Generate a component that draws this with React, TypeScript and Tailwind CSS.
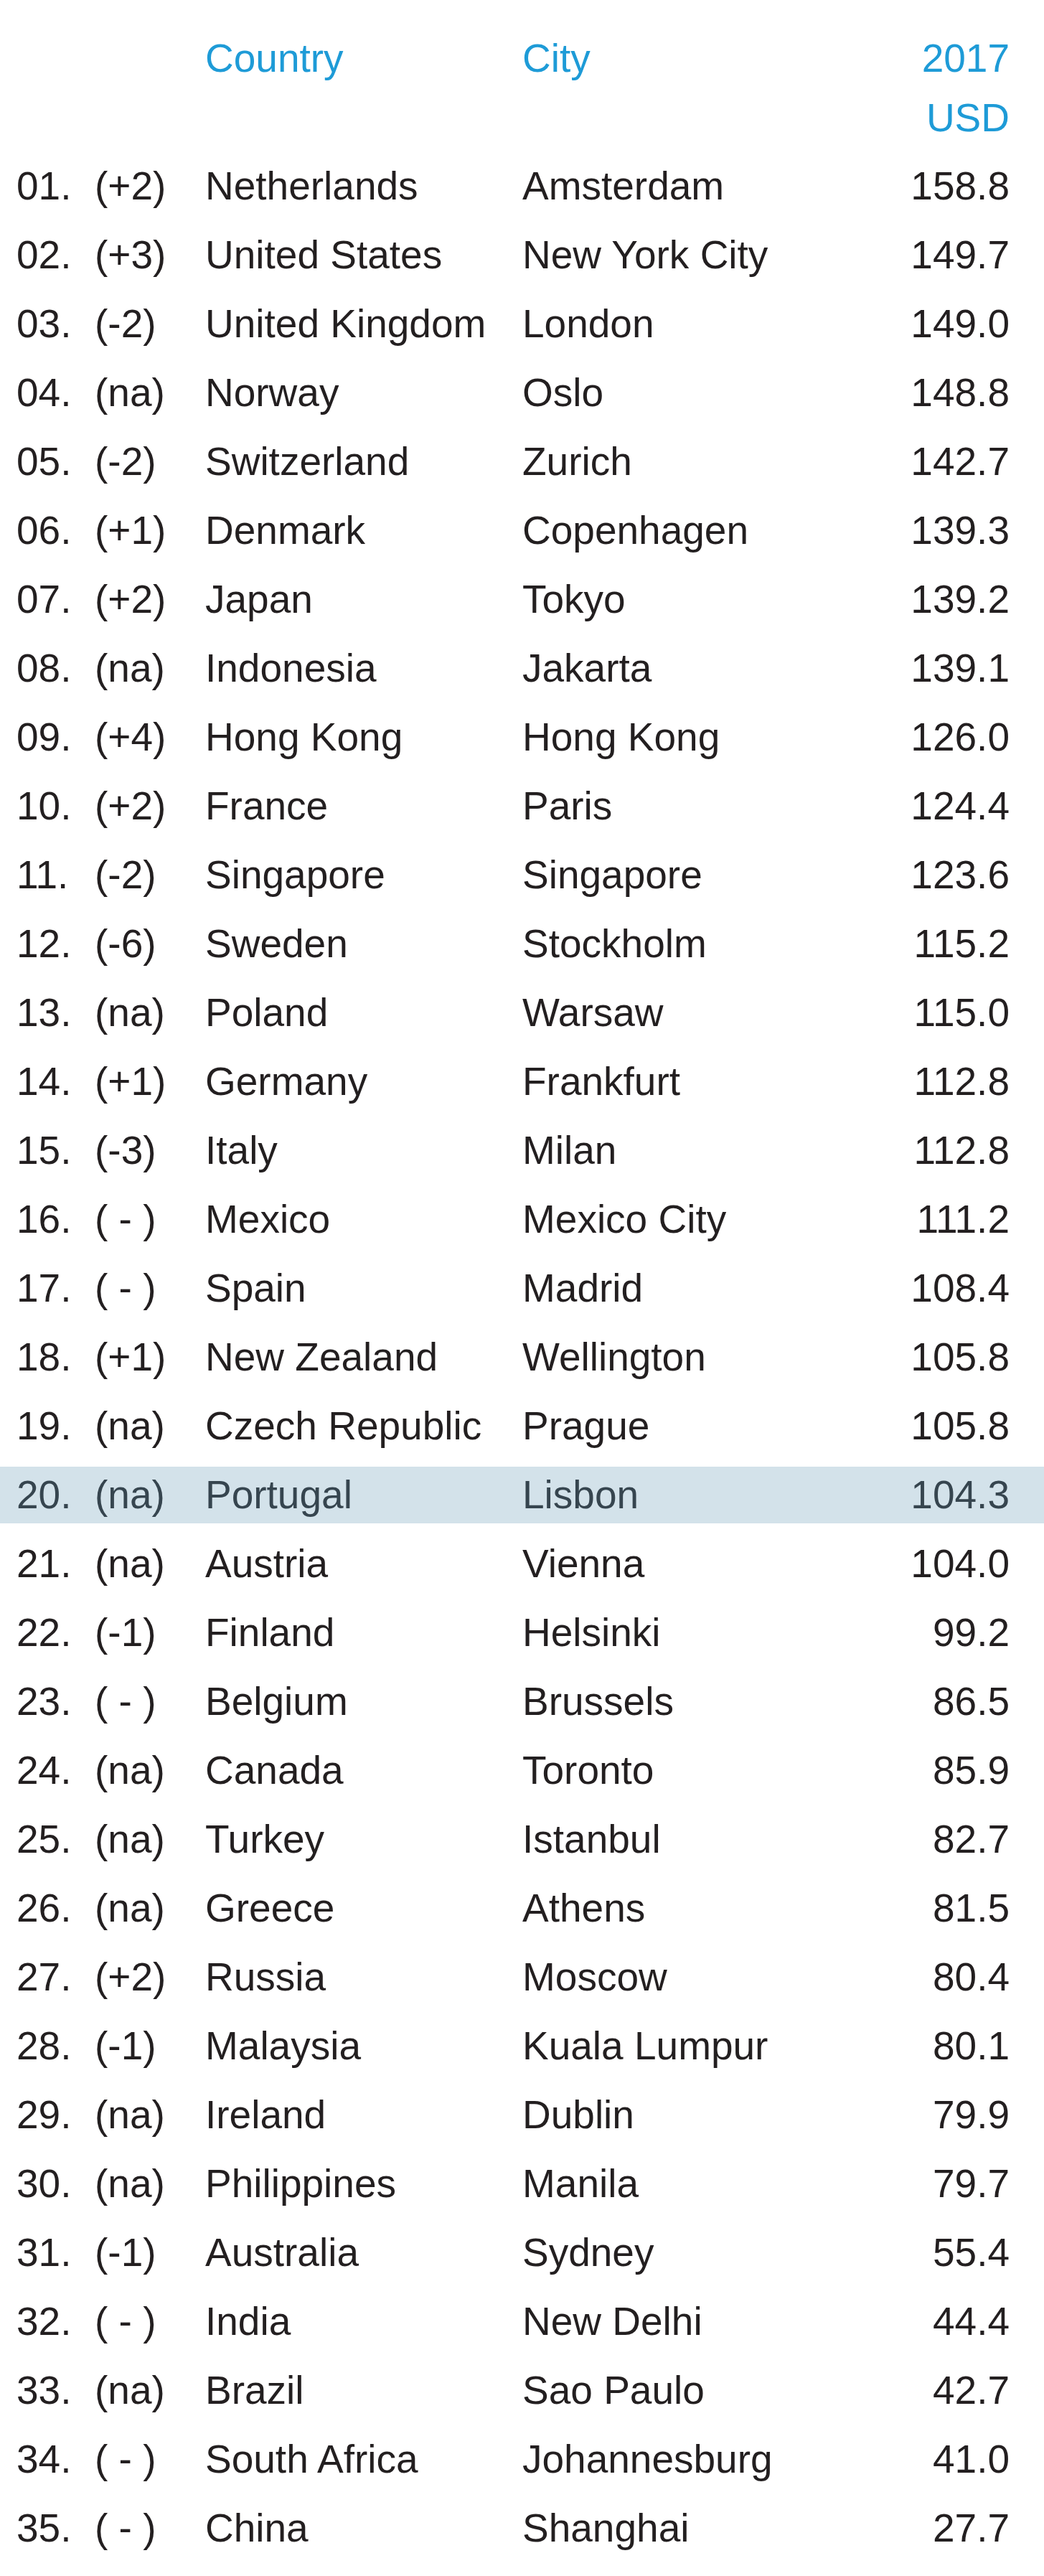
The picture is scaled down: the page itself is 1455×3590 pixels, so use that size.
const rows: [string, string, string, string, string][] = [
  ["01.", "(+2)", "Netherlands", "Amsterdam", "158.8"],
  ["02.", "(+3)", "United States", "New York City", "149.7"],
  ["03.", "(-2)", "United Kingdom", "London", "149.0"],
  ["04.", "(na)", "Norway", "Oslo", "148.8"],
  ["05.", "(-2)", "Switzerland", "Zurich", "142.7"],
  ["06.", "(+1)", "Denmark", "Copenhagen", "139.3"],
  ["07.", "(+2)", "Japan", "Tokyo", "139.2"],
  ["08.", "(na)", "Indonesia", "Jakarta", "139.1"],
  ["09.", "(+4)", "Hong Kong", "Hong Kong", "126.0"],
  ["10.", "(+2)", "France", "Paris", "124.4"],
  ["11.", "(-2)", "Singapore", "Singapore", "123.6"],
  ["12.", "(-6)", "Sweden", "Stockholm", "115.2"],
  ["13.", "(na)", "Poland", "Warsaw", "115.0"],
  ["14.", "(+1)", "Germany", "Frankfurt", "112.8"],
  ["15.", "(-3)", "Italy", "Milan", "112.8"],
  ["16.", "( - )", "Mexico", "Mexico City", "111.2"],
  ["17.", "( - )", "Spain", "Madrid", "108.4"],
  ["18.", "(+1)", "New Zealand", "Wellington", "105.8"],
  ["19.", "(na)", "Czech Republic", "Prague", "105.8"],
  ["20.", "(na)", "Portugal", "Lisbon", "104.3"],
  ["21.", "(na)", "Austria", "Vienna", "104.0"],
  ["22.", "(-1)", "Finland", "Helsinki", "99.2"],
  ["23.", "( - )", "Belgium", "Brussels", "86.5"],
  ["24.", "(na)", "Canada", "Toronto", "85.9"],
  ["25.", "(na)", "Turkey", "Istanbul", "82.7"],
  ["26.", "(na)", "Greece", "Athens", "81.5"],
  ["27.", "(+2)", "Russia", "Moscow", "80.4"],
  ["28.", "(-1)", "Malaysia", "Kuala Lumpur", "80.1"],
  ["29.", "(na)", "Ireland", "Dublin", "79.9"],
  ["30.", "(na)", "Philippines", "Manila", "79.7"],
  ["31.", "(-1)", "Australia", "Sydney", "55.4"],
  ["32.", "( - )", "India", "New Delhi", "44.4"],
  ["33.", "(na)", "Brazil", "Sao Paulo", "42.7"],
  ["34.", "( - )", "South Africa", "Johannesburg", "41.0"],
  ["35.", "( - )", "China", "Shanghai", "27.7"],
];

// rank | change | country | city | value
const cols = "grid grid-cols-[109px_154px_442px_1fr_auto] items-center pl-[23px] pr-[48px]";

const Row = ({ r }: { r: [string, string, string, string, string] }) => {
  const hl = r[2] === "Portugal";
  return (
    <div
      className={`${cols} h-[79px] leading-[79px] whitespace-pre ${
        hl ? "bg-[#d3e2ea] text-[#36454f]" : "text-[#231f20]"
      }`}
    >
      <span>{r[0]}</span>
      <span>{r[1]}</span>
      <span>{r[2]}</span>
      <span>{r[3]}</span>
      <span className="text-right">{r[4]}</span>
    </div>
  );
};

export default function App() {
  return (
    <div
      className="w-[1455px] min-h-[3590px] bg-white pt-[40px] text-[55px]"
      style={{ fontFamily: '"Liberation Sans", Arial, sans-serif' }}
    >
      <div className={`${cols} items-start leading-[83px] text-[#1e9bd7]`}>
        <span />
        <span />
        <span>Country</span>
        <span>City</span>
        <span className="text-right">
          2017
          <br />
          USD
        </span>
      </div>
      <div className="mt-[14px] flex flex-col gap-[17px]">
        {rows.map((r) => (
          <Row key={r[0]} r={r} />
        ))}
      </div>
    </div>
  );
}
